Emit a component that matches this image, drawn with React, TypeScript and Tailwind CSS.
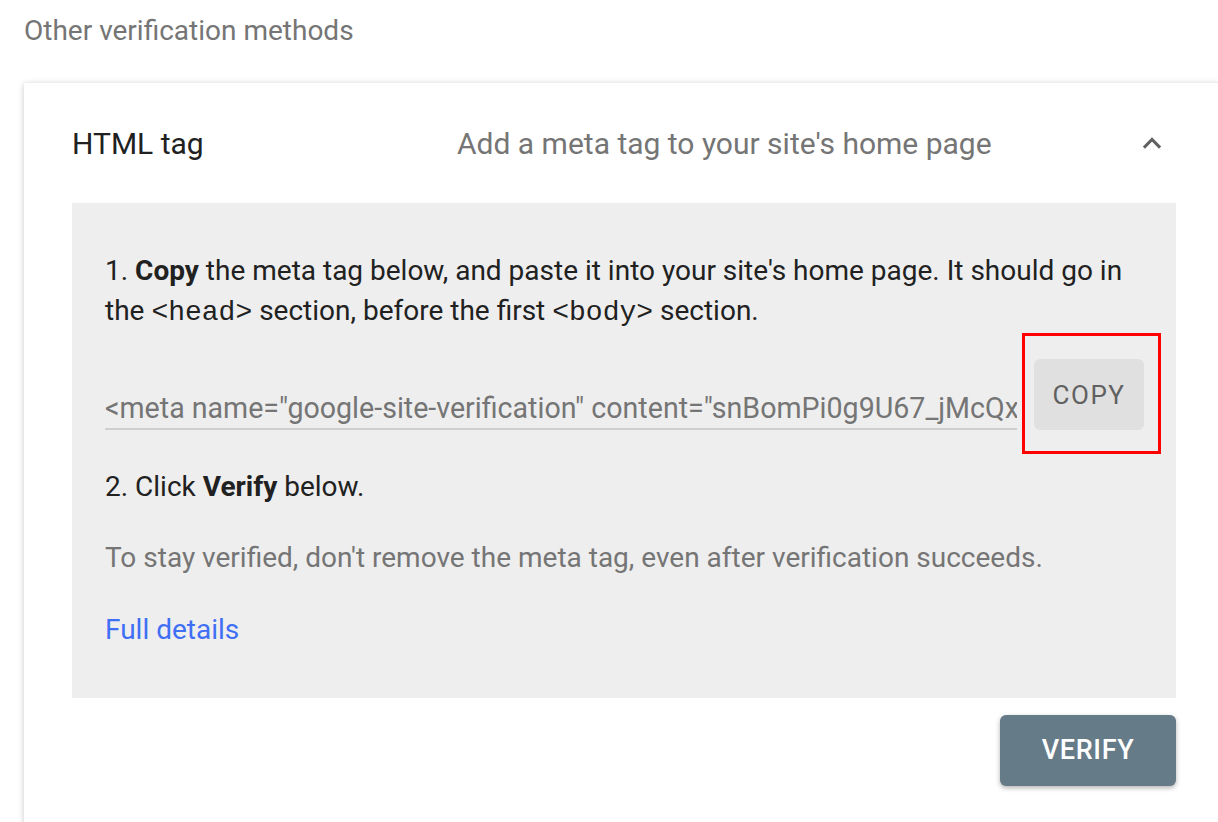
import React, { useState } from 'react'

const font = { fontFamily: 'Roboto, "Noto Sans", sans-serif' }
const mono = { fontFamily: '"Liberation Mono", "Courier New", monospace' }

const ChevronUp = () => (
    <svg width="28" height="28" viewBox="0 0 24 24" fill="none">
        <path d="M6 15l6-6 6 6" stroke="#616161" strokeWidth="2.6" strokeLinecap="square" />
    </svg>
)

const App = () => {
    const [open] = useState(true)
    const tag = '<meta name="google-site-verification" content="snBomPi0g9U67_jMcQx2LrV8tYkFh3nWdZpE4sA1" />'

    return (
        <div className="w-[1218px] h-[822px] overflow-hidden bg-white" style={font}>
            <div className="pl-6 pt-[13px] text-[28px] leading-9 text-[#757575]">Other verification methods</div>

            <div className="ml-6 mt-[34px] w-[1200px] bg-white shadow-[0_1px_6px_rgba(0,0,0,0.22)] px-12 pb-10">
                <div className="h-[120px] flex items-center">
                    <div className="w-[385px] text-[30px] text-[#212121]">HTML tag</div>
                    <div className="flex-1 text-[30px] text-[#757575]">Add a meta tag to your site's home page</div>
                    <div className="mr-[10px]"><ChevronUp /></div>
                </div>

                {open && (
                    <div className="bg-[#eeeeee] pt-12 pb-12 pl-[33px] pr-4 text-[28px] leading-[40px] text-[#212121]">
                        <p>
                            1. <b className="font-bold">Copy</b> the meta tag below, and paste it into your site's home page. It should go in the{' '}
                            <code className="text-[28px] leading-[40px]" style={mono}>&lt;head&gt;</code> section, before the first{' '}
                            <code className="text-[28px] leading-[40px]" style={mono}>&lt;body&gt;</code> section.
                        </p>

                        <div className="mt-[26px] flex items-end">
                            <input
                                readOnly
                                value={tag}
                                className="w-[912px] h-[42px] bg-transparent border-b-2 border-[#cfcfcf] text-[28.6px] text-[#757575] outline-none"
                                style={font}
                            />
                            <div className="relative ml-[17px]">
                                <button className="block w-[110px] h-[71px] rounded-md bg-[#e0e0e0] text-[26px] font-normal tracking-[0.06em] text-[#616161]">
                                    COPY
                                </button>
                                <div className="absolute -left-[12px] -top-[26px] w-[139px] h-[121px] border-[3px] border-[#ff0000] pointer-events-none" />
                            </div>
                        </div>

                        <p className="mt-[37px]">2. Click <b className="font-bold">Verify</b> below.</p>

                        <p className="mt-[31px] text-[#757575]">To stay verified, don't remove the meta tag, even after verification succeeds.</p>

                        <a href="#" className="block mt-[32px] text-[#3f6ff5]">Full details</a>
                    </div>
                )}

                <div className="mt-[17px] flex justify-end">
                    <button className="w-[176px] h-[71px] rounded-md bg-[#667b88] text-white text-[27px] font-medium tracking-wide shadow-[0_2px_5px_rgba(0,0,0,0.3)]">
                        VERIFY
                    </button>
                </div>
            </div>
        </div>
    )
}

export default App
